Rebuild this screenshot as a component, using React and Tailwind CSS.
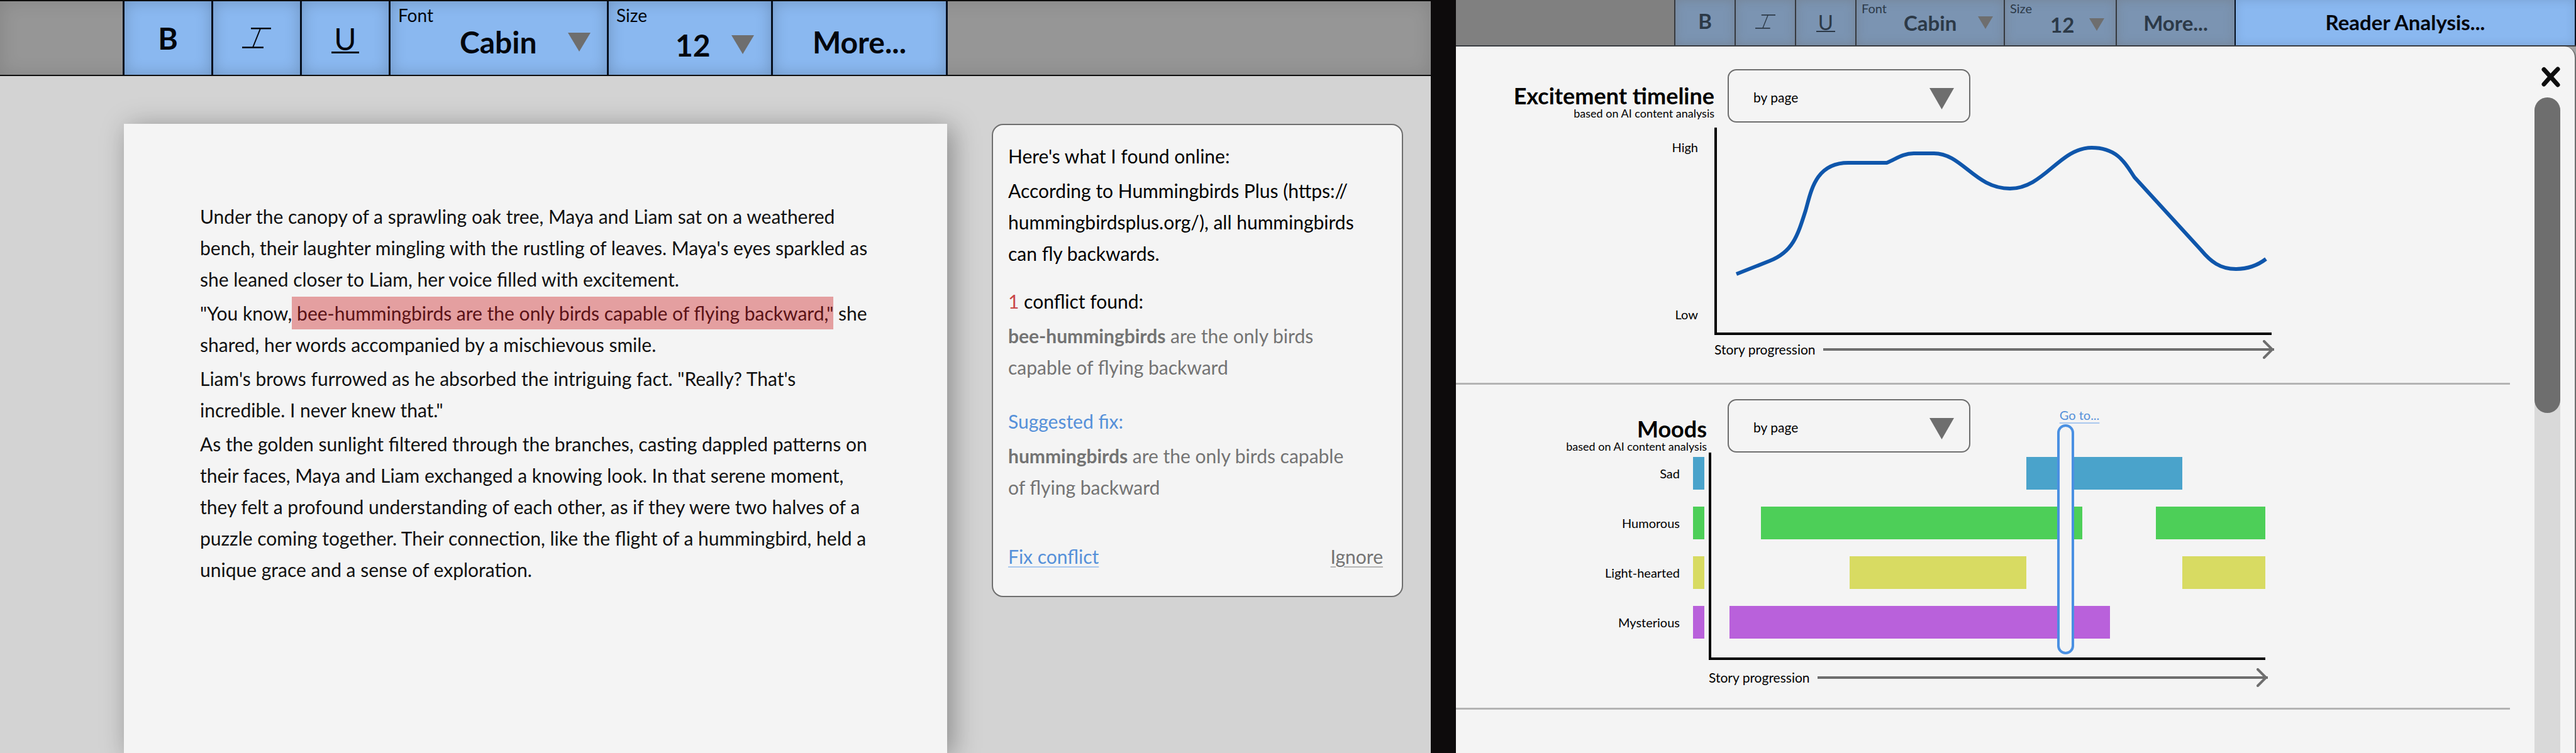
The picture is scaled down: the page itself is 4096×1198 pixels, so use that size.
import React from "react";

const TEXT_COLOR = "#6e6e6e";

function Triangle({ className }) {
  return (
    <svg viewBox="0 0 36 30" preserveAspectRatio="none" className={className} aria-hidden="true">
      <polygon points="0,0 36,0 18,30" fill={TEXT_COLOR} />
    </svg>
  );
}

function ItalicIcon({ className }) {
  return (
    <svg viewBox="0 0 46 33" className={className} fill="none" stroke="currentColor" aria-hidden="true">
      <path d="M14 1.3H46M0 31.5H34" strokeWidth="2.6" />
      <path d="M29 1.5L17 31.5" strokeWidth="2" />
    </svg>
  );
}

const large = {
  bar: "border-y-2 border-[#0d0d0d] bg-[#969696] pl-[195px] h-[121px] shadow-[inset_0_0_30px_rgba(0,0,0,0.12)]",
  cell: "border-l-[3px] border-[#06101f] bg-[#8ab8f0] text-[#03060d] shadow-[inset_0_0_24px_rgba(0,0,0,0.2)]",
  icon: "w-[141px] text-[48px]",
  italic: "h-[33px] w-[46px]",
  underline: "border-b-[3px] px-1 leading-[41px] mt-1",
  label: "left-3 top-2 text-[28px] leading-[28px]",
  fontCell: "w-[347px]",
  sizeCell: "w-[261px]",
  fontSelect: "pl-[110px] pt-3 text-[48px]",
  sizeSelect: "pl-[106px] pt-[22px] text-[48px]",
  fontTriangle: "right-[26px] top-[50px] h-[30px] w-9",
  sizeTriangle: "right-[27px] top-[54px] h-[30px] w-9",
  more: "w-[281px] border-r-[3px] pt-3 text-[48px]",
};

const small = {
  bar: "border-b-2 border-[#3a3d42] bg-[#808080] pl-[347px] h-[74px]",
  cell: "border-l-2 border-[#36393e] bg-[#7b94b2] text-[#2c3947] shadow-[inset_0_0_16px_rgba(110,110,110,0.4)]",
  icon: "w-24 pb-1 text-[33px]",
  italic: "h-[23px] w-8",
  underline: "border-b-2 px-[3px] leading-[28px] mt-1",
  label: "left-2 top-0 text-[20px] leading-[26px]",
  fontCell: "w-[236px]",
  sizeCell: "w-[178px]",
  fontSelect: "pl-[75px] pt-[2px] text-[33px]",
  sizeSelect: "pl-[72px] pt-[8px] text-[33px]",
  fontTriangle: "right-[17px] top-[26px] h-5 w-6",
  sizeTriangle: "right-[18px] top-[29px] h-5 w-6",
  more: "w-[189px] pt-[2px] text-[33px]",
};

function ToolSelect({ s, id, label, value, cell, select, triangle }) {
  return (
    <div className={`relative shrink-0 ${s.cell} ${cell}`}>
      <label htmlFor={id} className={`absolute ${s.label}`}>
        {label}
      </label>
      <select id={id} className={`h-full w-full appearance-none bg-transparent font-bold outline-none ${select}`}>
        <option>{value}</option>
      </select>
      <Triangle className={`pointer-events-none absolute ${triangle}`} />
    </div>
  );
}

function Toolbar({ s, prefix, children }) {
  return (
    <div className={`flex shrink-0 items-stretch ${s.bar}`} role="toolbar">
      <button className={`flex shrink-0 items-center justify-center font-bold ${s.cell} ${s.icon}`}>B</button>
      <button aria-label="Italic" className={`flex shrink-0 items-center justify-center ${s.cell} ${s.icon}`}>
        <ItalicIcon className={s.italic} />
      </button>
      <button className={`flex shrink-0 items-center justify-center ${s.cell} ${s.icon}`}>
        <span className={`border-current ${s.underline}`}>U</span>
      </button>
      <ToolSelect s={s} id={`${prefix}-font`} label="Font" value="Cabin" cell={s.fontCell} select={s.fontSelect} triangle={s.fontTriangle} />
      <ToolSelect s={s} id={`${prefix}-size`} label="Size" value="12" cell={s.sizeCell} select={s.sizeSelect} triangle={s.sizeTriangle} />
      <button className={`shrink-0 text-center font-bold ${s.cell} ${s.more}`}>More...</button>
      {children}
    </div>
  );
}

function Editor() {
  return (
    <article className="w-[1309px] shrink-0 space-y-1 whitespace-nowrap bg-[#f4f4f4] px-[121px] pt-[122px] text-[30px] leading-[50px] text-[#111] shadow-[8px_6px_40px_rgba(0,0,0,0.35)]">
      <p>
        Under the canopy of a sprawling oak tree, Maya and Liam sat on a weathered
        <br />
        bench, their laughter mingling with the rustling of leaves. Maya's eyes sparkled as
        <br />
        she leaned closer to Liam, her voice filled with excitement.
      </p>
      <p>
        "You know,
        <mark className="bg-[#e49fa0] py-2 text-[#5a1216]"> bee-hummingbirds are the only birds capable of flying backward,"</mark> she
        <br />
        shared, her words accompanied by a mischievous smile.
      </p>
      <p>
        Liam's brows furrowed as he absorbed the intriguing fact. "Really? That's
        <br />
        incredible. I never knew that."
      </p>
      <p>
        As the golden sunlight filtered through the branches, casting dappled patterns on
        <br />
        their faces, Maya and Liam exchanged a knowing look. In that serene moment,
        <br />
        they felt a profound understanding of each other, as if they were two halves of a
        <br />
        puzzle coming together. Their connection, like the flight of a hummingbird, held a
        <br />
        unique grace and a sense of exploration.
      </p>
    </article>
  );
}

function ConflictCard() {
  return (
    <aside className="w-[654px] shrink-0 self-start whitespace-nowrap rounded-[18px] border-2 border-[#6e6e6e] bg-[#f4f4f4] px-6 pb-[38px] pt-6 text-[30px] leading-[50px] text-black">
      <p>Here's what I found online:</p>
      <p className="mt-[5px]">
        According to Hummingbirds Plus (https://
        <br />
        hummingbirdsplus.org/), all hummingbirds
        <br />
        can fly backwards.
      </p>
      <p className="mt-[26px]">
        <span className="text-[#c94747]">1</span> conflict found:
      </p>
      <p className="mt-[5px] text-[#737373]">
        <strong>bee-hummingbirds</strong> are the only birds
        <br />
        capable of flying backward
      </p>
      <p className="mt-9 text-[#5590d9]">Suggested fix:</p>
      <p className="mt-[5px] text-[#737373]">
        <strong>hummingbirds</strong> are the only birds capable
        <br />
        of flying backward
      </p>
      <div className="mt-[60px] flex justify-between pr-[6px]">
        <button className="text-[#5590d9] underline decoration-[#a9c8ee] decoration-2 underline-offset-4">Fix conflict</button>
        <button className="text-[#737373] underline decoration-[#b5b5b5] decoration-2 underline-offset-4">Ignore</button>
      </div>
    </aside>
  );
}

function ChartHeader({ id, title, side, gap, pad }) {
  return (
    <div className={`flex h-[85px] items-stretch ${gap}`}>
      <div className={`flex shrink-0 flex-col justify-end whitespace-nowrap text-right ${side} ${pad}`}>
        <h2 className="text-[36px] font-bold leading-[36px]">{title}</h2>
        <p className="text-[18px] leading-[20px]">based on AI content analysis</p>
      </div>
      <div className="relative w-[386px]">
        <select
          id={id}
          aria-label={`${title} grouping`}
          className="h-full w-full appearance-none rounded-[14px] border-2 border-[#6e6e6e] bg-transparent pl-[39px] pt-1 text-[21px] outline-none"
        >
          <option>by page</option>
        </select>
        <Triangle className="pointer-events-none absolute right-[26px] top-[30px] h-[34px] w-[39px]" />
      </div>
    </div>
  );
}

function Progression() {
  return (
    <div className="flex h-[30px] items-center gap-3">
      <span className="whitespace-nowrap text-[21px] leading-[30px]">Story progression</span>
      <div className="-mr-1 flex flex-1 items-center">
        <div className="h-1 flex-1 bg-[#6e6e6e]" />
        <svg viewBox="0 0 18 30" className="-ml-[18px] h-[30px] w-[18px]" fill="none" stroke={TEXT_COLOR} strokeWidth="4" aria-hidden="true">
          <path d="M2 2L15 15L2 28" strokeLinecap="round" />
        </svg>
      </div>
    </div>
  );
}

const moods = [
  { name: "Sad", color: "#4aa3cb", bars: [[501, 248]] },
  { name: "Humorous", color: "#4dcf58", bars: [[79, 511], [117, 174]] },
  { name: "Light-hearted", color: "#d8db62", bars: [[220, 281], [248, 132]] },
  { name: "Mysterious", color: "#b961db", bars: [[29, 605]] },
];
const PLOT = 881;
const pct = (n) => `${(n / PLOT) * 100}%`;

function Excitement() {
  return (
    <section className="pb-[38px] pt-9">
      <ChartHeader id="excitement-by" title="Excitement timeline" side="w-[411px]" gap="gap-[21px]" pad="pb-[5px]" />
      <div className="mt-2 flex pr-[379px]">
        <div className="flex w-[411px] shrink-0 flex-col justify-between pb-14 pr-[26px] pt-4 text-right text-[20px] leading-[30px]">
          <span>High</span>
          <span>Low</span>
        </div>
        <div className="flex-1">
          <div className="h-[330px] border-b-4 border-l-4 border-black">
            <svg viewBox="0 0 882 326" preserveAspectRatio="none" className="h-full w-full" fill="none" role="img" aria-label="Excitement over the story">
              <path
                d="M31 233L84 212C120 198 128 173 141 132C150 100 157 56 209 56H270C285 50 295 41 313 41H345C390 41 410 97 466 97C520 97 545 32 596 32C640 32 652 62 664 79L770 195C785 213 800 225 825 225C845 225 860 219 873 209"
                stroke="#0f56ab"
                strokeWidth="6"
              />
            </svg>
          </div>
          <div className="mt-2">
            <Progression />
          </div>
        </div>
      </div>
    </section>
  );
}

function Moods() {
  return (
    <section className="pb-[33px] pt-[23px]">
      <ChartHeader id="moods-by" title="Moods" side="w-[401px]" gap="gap-[31px]" pad="pr-[2px]" />
      <div className="flex pr-[389px]">
        <div className="flex w-[402px] shrink-0 flex-col gap-[27px] pr-[7px] pt-[7px]">
          {moods.map((m) => (
            <div key={m.name} className="flex h-[52px] items-center justify-end gap-[21px] text-[20px]">
              <span>{m.name}</span>
              <span className="h-full w-[18px]" style={{ background: m.color }} />
            </div>
          ))}
        </div>
        <div className="flex-1">
          <div className="relative flex h-[330px] flex-col gap-[27px] border-b-4 border-l-4 border-black pt-[7px]">
            {moods.map((m) => (
              <div key={m.name} className="flex h-[52px]">
                {m.bars.map(([lead, width]) => (
                  <div key={lead} className="h-full shrink-0" style={{ marginLeft: pct(lead), width: pct(width), background: m.color }} />
                ))}
              </div>
            ))}
            <div className="absolute -top-[75px] bottom-[5px] left-[62.4%] flex flex-col items-start">
              <a href="#go-to" className="ml-1 whitespace-nowrap text-[20px] leading-[30px] text-[#5590d9] underline decoration-[#a9c8ee] decoration-2 underline-offset-4">
                Go to...
              </a>
              <button aria-label="Story position" className="w-[27px] flex-1 rounded-full border-4 border-[#4a90e2] bg-[#f4f4f4]" />
            </div>
          </div>
          <div className="mt-[13px]">
            <Progression />
          </div>
        </div>
      </div>
    </section>
  );
}

export default function App() {
  return (
    <main className="flex h-screen overflow-hidden bg-[#0d0b0c] font-['Lato','Open_Sans',sans-serif]">
      <div className="flex min-w-0 flex-[2275] flex-col overflow-hidden bg-[#d3d3d3]">
        <Toolbar s={large} prefix="main" />
        <div className="flex flex-1 gap-[71px] pl-[197px] pt-[76px]">
          <Editor />
          <ConflictCard />
        </div>
      </div>
      <div className="w-10 shrink-0" />
      <div className="flex min-w-0 flex-[1781] flex-col overflow-hidden bg-[#a3a3a3] text-black">
        <Toolbar s={small} prefix="reader">
          <button className="flex-1 border-x-2 border-[#06101f] bg-[#8ab8f0] text-center text-[33px] font-bold text-[#03060d] shadow-[inset_0_0_16px_rgba(0,0,0,0.12)]">
            Reader Analysis...
          </button>
        </Toolbar>
        <div className="flex flex-1 rounded-tr-[18px] border-r-2 border-[#6e6e6e] bg-[#f4f4f4]">
          <div className="min-w-0 flex-1">
            <Excitement />
            <hr className="border-t-[3px] border-[#b3b3b3]" />
            <Moods />
            <hr className="border-t-[3px] border-[#b3b3b3]" />
          </div>
          <div className="flex w-[103px] shrink-0 flex-col items-end pr-[23px] pt-8">
            <button aria-label="Close">
              <svg viewBox="0 0 30 33" className="h-[33px] w-[30px]" fill="none" stroke="#0e0e0e" strokeWidth="7" strokeLinecap="round" aria-hidden="true">
                <path d="M4 4.5C11 12 18 20 26 29M26 4C18 12 11 20 4 28" />
              </svg>
            </button>
            <div className="mt-4 w-[41px] flex-1 rounded-t-full bg-[#d9d9d9]">
              <div className="h-[502px] rounded-full bg-[#6e6e6e]" />
            </div>
          </div>
        </div>
      </div>
    </main>
  );
}
